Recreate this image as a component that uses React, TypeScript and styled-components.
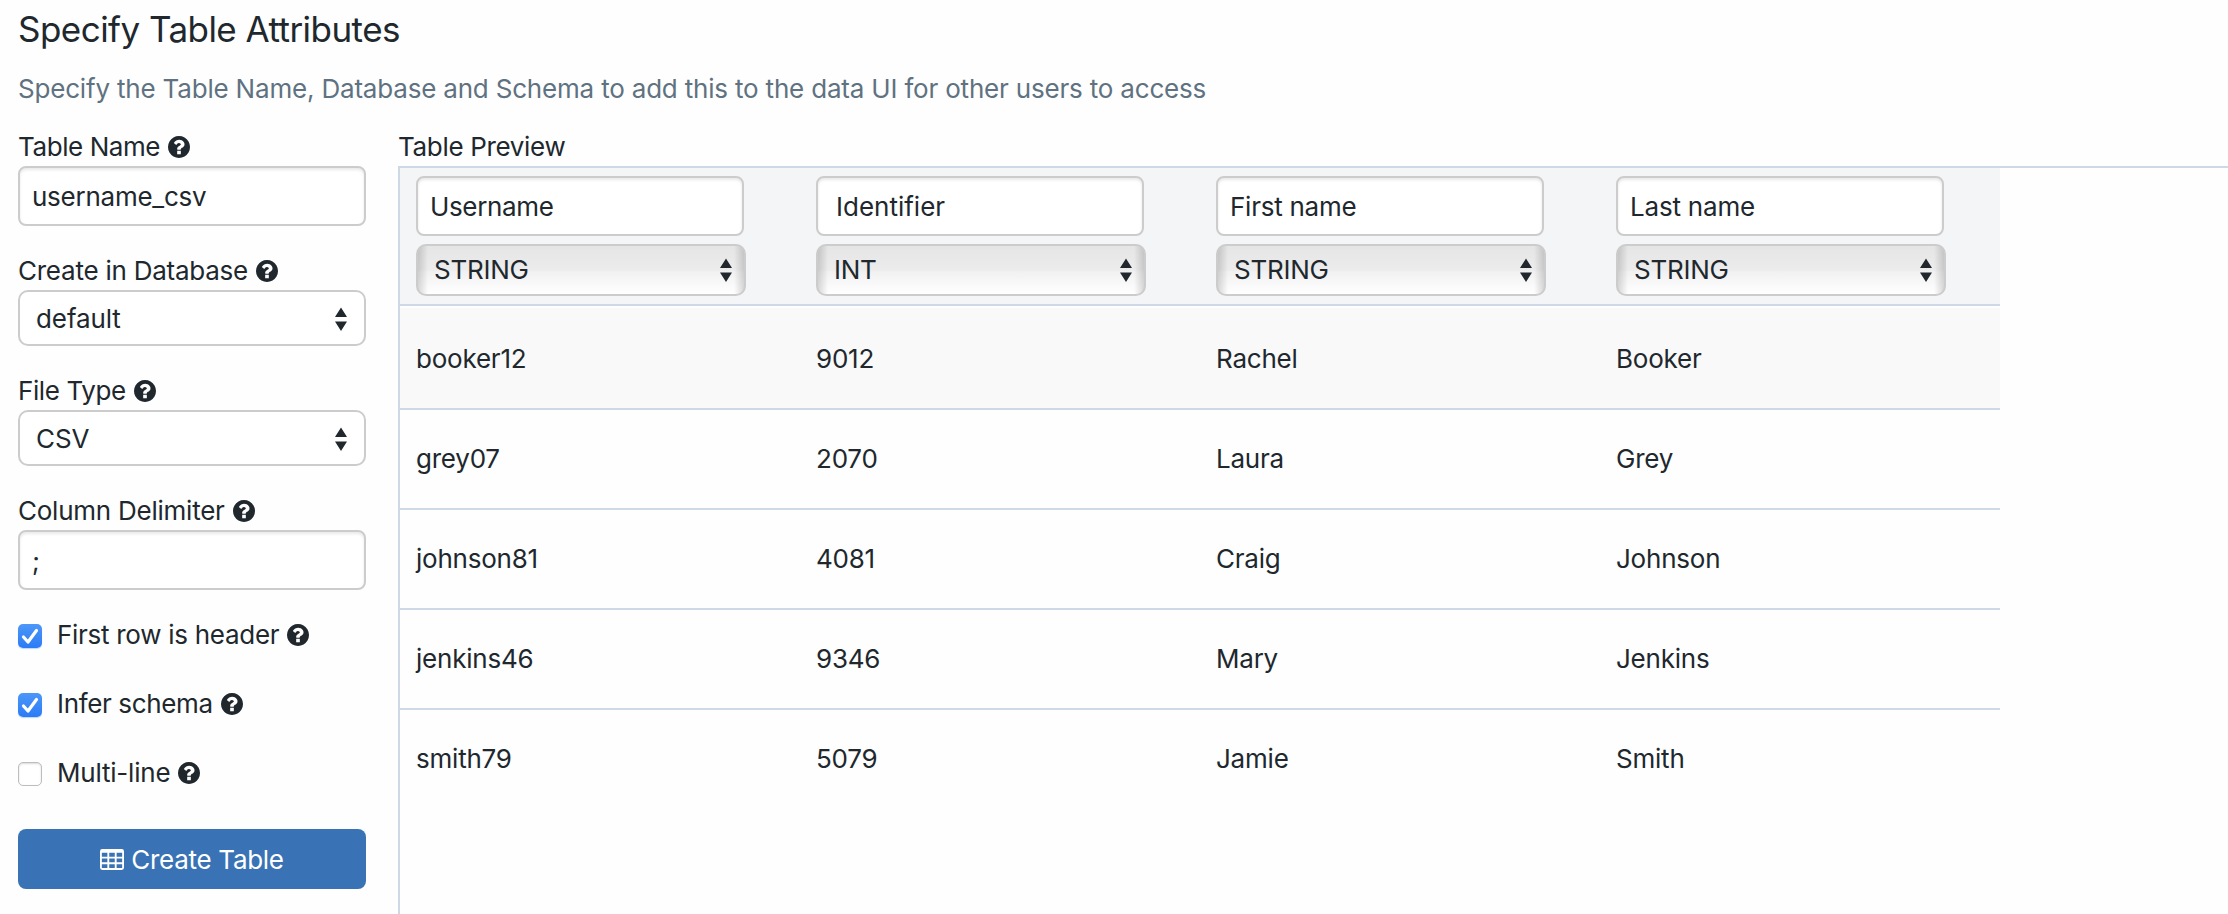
import React from "react";
import styled, { createGlobalStyle } from "styled-components";

const GlobalStyle = createGlobalStyle`
  * { box-sizing: border-box; }
  html, body { margin: 0; height: 100%; background: #fefefe; overflow: hidden; }
  body, input, select, button {
    font-family: Inter, "Liberation Sans", sans-serif;
    font-size: 26px;
    color: #20282e;
  }
`;

const Page = styled.div`
  height: 914px;
  display: flex;
  flex-direction: column;
`;

const Title = styled.h1`
  margin: 5px 0 0 18px;
  height: 49px;
  line-height: 48px;
  font-size: 35px;
  font-weight: 400;
  letter-spacing: -0.54px;
`;

const Description = styled.p`
  margin: 16px 0 0 18px;
  height: 38px;
  line-height: 38px;
  letter-spacing: -0.188px;
  color: #5f7281;
`;

const Columns = styled.div`
  flex: 1;
  min-height: 0;
  display: flex;
  margin-top: 20px;
`;

const Sidebar = styled.form`
  width: 398px;
  padding: 0 32px 0 18px;
  display: flex;
  flex-direction: column;
`;

const Field = styled.div`
  display: flex;
  flex-direction: column;
  margin-bottom: 26px;
`;

const Label = styled.label`
  display: flex;
  align-items: center;
  gap: 8px;
  height: 38px;
  white-space: nowrap;
`;

const LabelText = styled.span<{ $spacing?: number }>`
  margin-top: -2px;
  letter-spacing: ${(p) => p.$spacing ?? -0.24}px;
`;

const TextInput = styled.input<{ $spacing?: number; $indent?: number }>`
  width: 100%;
  height: 60px;
  padding: 0 12px 0 ${(p) => p.$indent ?? 12}px;
  border: 2px solid #ccc;
  border-radius: 8px;
  background: #fff;
  box-shadow: inset 0 2px 3px rgba(0, 0, 0, 0.09);
  letter-spacing: ${(p) => p.$spacing ?? -0.25}px;
  outline: none;
`;

const SelectBox = styled.div`
  position: relative;
`;

const NativeSelect = styled.select<{ $glossy?: boolean }>`
  display: block;
  appearance: none;
  width: 100%;
  height: ${(p) => (p.$glossy ? 52 : 56)}px;
  padding: 0 40px ${(p) => (p.$glossy ? 2 : 0)}px 16px;
  border: 2px solid #ccc;
  border-radius: 10px;
  background: ${(p) =>
    p.$glossy
      ? "linear-gradient(90deg, rgba(0,0,0,.15), transparent 10px, transparent calc(100% - 10px), rgba(0,0,0,.15)), linear-gradient(#e5e5e5, #ececec 50%, #f1f1f1 54%, #fff)"
      : "#fff"};
  letter-spacing: ${(p) => (p.$glossy ? -0.25 : -0.1)}px;
  outline: none;
`;

const SelectArrows = styled.svg<{ $glossy?: boolean }>`
  position: absolute;
  right: ${(p) => (p.$glossy ? 14 : 19.5)}px;
  top: ${(p) => (p.$glossy ? 14 : 17)}px;
  width: 12px;
  height: 24px;
  pointer-events: none;
`;

const HelpSvg = styled.svg`
  width: 22px;
  height: 22px;
  flex: none;
`;

const CheckRow = styled.label`
  display: flex;
  align-items: center;
  height: 38px;
  margin-bottom: 31px;
  white-space: nowrap;
`;

const CheckBox = styled.span<{ $checked: boolean }>`
  display: flex;
  width: 24px;
  height: 24px;
  margin: 2px 15px 0 0;
  border-radius: 5px;
  background: ${(p) => (p.$checked ? "linear-gradient(#4c97f8, #2c7bf6)" : "#fff")};
  border: ${(p) => (p.$checked ? "none" : "1px solid #bdbdbd")};
  box-shadow: ${(p) =>
    p.$checked ? "0 1px 1px rgba(44,123,246,.3)" : "inset 0 1px 2px rgba(0,0,0,.15)"};
`;

const CheckText = styled(LabelText)`
  margin-right: 8px;
`;

const CreateButton = styled.button`
  display: flex;
  align-items: center;
  justify-content: center;
  gap: 7px;
  width: 100%;
  height: 60px;
  margin-top: 6px;
  border: 0;
  border-radius: 8px;
  background: #3973b5;
  color: #fff;
  letter-spacing: -0.3px;
`;

const Preview = styled.section`
  flex: 1;
  min-width: 0;
  display: flex;
  flex-direction: column;
`;

const PreviewTitle = styled.div`
  height: 38px;
  line-height: 37px;
  letter-spacing: -0.33px;
`;

const PreviewFrame = styled.div`
  flex: 1;
  border-top: 2px solid #ced9e5;
  border-left: 2px solid #ced9e5;
`;

const HeaderRow = styled.div`
  display: flex;
  width: 1600px;
  height: 138px;
  background: #f3f5f7;
  border-bottom: 2px solid #ced9e5;
`;

const HeaderCell = styled.div`
  width: 400px;
  padding: 8px 54px 0 16px;
  display: flex;
  flex-direction: column;
  gap: 8px;
`;

const NameSlot = styled.div`
  padding-right: 2px;
`;

const Row = styled.div<{ $first: boolean; $last: boolean }>`
  display: flex;
  align-items: center;
  width: 1600px;
  height: ${(p) => (p.$last ? 98 : p.$first ? 102 : 100)}px;
  margin-top: ${(p) => (p.$first ? 2 : 0)}px;
  padding-top: ${(p) => (p.$first ? 2 : 0)}px;
  background: ${(p) => (p.$first ? "#f9f9f9" : "transparent")};
  border-bottom: ${(p) => (p.$last ? "none" : "2px solid #ced9e5")};
`;

const Cell = styled.div`
  width: 400px;
  padding: 0 0 1px 16px;
  letter-spacing: -0.22px;
`;

const HelpIcon = () => (
  <HelpSvg viewBox="128 128 1536 1536" fill="#20282e">
    <path d="M1024 1376v-192q0-14-9-23t-23-9h-192q-14 0-23 9t-9 23v192q0 14 9 23t23 9h192q14 0 23-9t9-23zm256-672q0-88-55.5-163t-138.5-116-170-41q-243 0-371 213-15 24 8 42l132 100q7 6 19 6 16 0 25-12 53-68 86-92 34-24 86-24 48 0 85.5 26t37.5 59q0 38-20 61t-68 45q-63 28-115.5 86.5t-52.5 125.5v36q0 14 9 23t23 9h192q14 0 23-9t9-23q0-19 21.5-49.5t54.5-49.5q32-18 49-28.5t46-35 44.5-48 28-60.5 12.5-81zm384 192q0 209-103 385.5t-279.5 279.5-385.5 103-385.5-103-279.5-279.5-103-385.5 103-385.5 279.5-279.5 385.5-103 385.5 103 279.5 279.5 103 385.5z" />
  </HelpSvg>
);

const cellRects = [384, 768, 1152]
  .flatMap((y) => [192, 704, 1216].map((x) => `M${x} ${y}v256h384v-256z`))
  .join("");

const TableIcon = () => (
  <svg width="24" height="21" viewBox="64 128 1664 1408" preserveAspectRatio="none" fill="#fff">
    <path
      fillRule="evenodd"
      d={`M224 128H1568a160 160 0 0 1 160 160V1376a160 160 0 0 1-160 160H224a160 160 0 0 1-160-160V288a160 160 0 0 1 160-160z${cellRects}`}
    />
  </svg>
);

type SelectProps = { value: string; glossy?: boolean };

const Select = ({ value, glossy }: SelectProps) => (
  <SelectBox>
    <NativeSelect defaultValue={value} $glossy={glossy}>
      <option>{value}</option>
    </NativeSelect>
    <SelectArrows viewBox="0 0 12 24" fill="#20282e" $glossy={glossy}>
      <path d="M6 0.5L12 10H0zM6 24L0 14.5H12z" />
    </SelectArrows>
  </SelectBox>
);

const options = [
  { text: "First row is header", checked: true, spacing: -0.28 },
  { text: "Infer schema", checked: true, spacing: -0.35 },
  { text: "Multi-line", checked: false, spacing: -0.2 },
];

const columns = [
  { name: "Username", type: "STRING", spacing: -0.35 },
  { name: "Identifier", type: "INT", indent: 18, spacing: 0 },
  { name: "First name", type: "STRING", spacing: -0.25 },
  { name: "Last name", type: "STRING", spacing: -0.2 },
];

const rows = [
  ["booker12", "9012", "Rachel", "Booker"],
  ["grey07", "2070", "Laura", "Grey"],
  ["johnson81", "4081", "Craig", "Johnson"],
  ["jenkins46", "9346", "Mary", "Jenkins"],
  ["smith79", "5079", "Jamie", "Smith"],
];

export default function App() {
  return (
    <Page>
      <GlobalStyle />
      <Title>Specify Table Attributes</Title>
      <Description>
        Specify the Table Name, Database and Schema to add this to the data UI for other users to access
      </Description>
      <Columns>
        <Sidebar>
          <Field>
            <Label><LabelText $spacing={-0.42}>Table Name</LabelText><HelpIcon /></Label>
            <TextInput defaultValue="username_csv" />
          </Field>
          <Field>
            <Label><LabelText>Create in Database</LabelText><HelpIcon /></Label>
            <Select value="default" />
          </Field>
          <Field>
            <Label><LabelText $spacing={-0.4}>File Type</LabelText><HelpIcon /></Label>
            <Select value="CSV" />
          </Field>
          <Field>
            <Label><LabelText>Column Delimiter</LabelText><HelpIcon /></Label>
            <TextInput defaultValue=";" />
          </Field>
          {options.map((o) => (
            <CheckRow key={o.text}>
              <CheckBox $checked={o.checked}>
                {o.checked && (
                  <svg width="24" height="24" viewBox="0 0 24 24" fill="none" stroke="#fff" strokeWidth="3.2" strokeLinecap="round" strokeLinejoin="round">
                    <path d="M5.5 13L10 18L18.5 6.5" />
                  </svg>
                )}
              </CheckBox>
              <CheckText $spacing={o.spacing}>{o.text}</CheckText>
              <HelpIcon />
            </CheckRow>
          ))}
          <CreateButton type="button"><TableIcon />Create Table</CreateButton>
        </Sidebar>
        <Preview>
          <PreviewTitle>Table Preview</PreviewTitle>
          <PreviewFrame>
            <HeaderRow>
              {columns.map((c) => (
                <HeaderCell key={c.name}>
                  <NameSlot>
                    <TextInput defaultValue={c.name} $indent={c.indent} $spacing={c.spacing} />
                  </NameSlot>
                  <Select value={c.type} glossy />
                </HeaderCell>
              ))}
            </HeaderRow>
            {rows.map((r, i) => (
              <Row key={r[0]} $first={i === 0} $last={i === rows.length - 1}>
                {r.map((v) => <Cell key={v}>{v}</Cell>)}
              </Row>
            ))}
          </PreviewFrame>
        </Preview>
      </Columns>
    </Page>
  );
}
